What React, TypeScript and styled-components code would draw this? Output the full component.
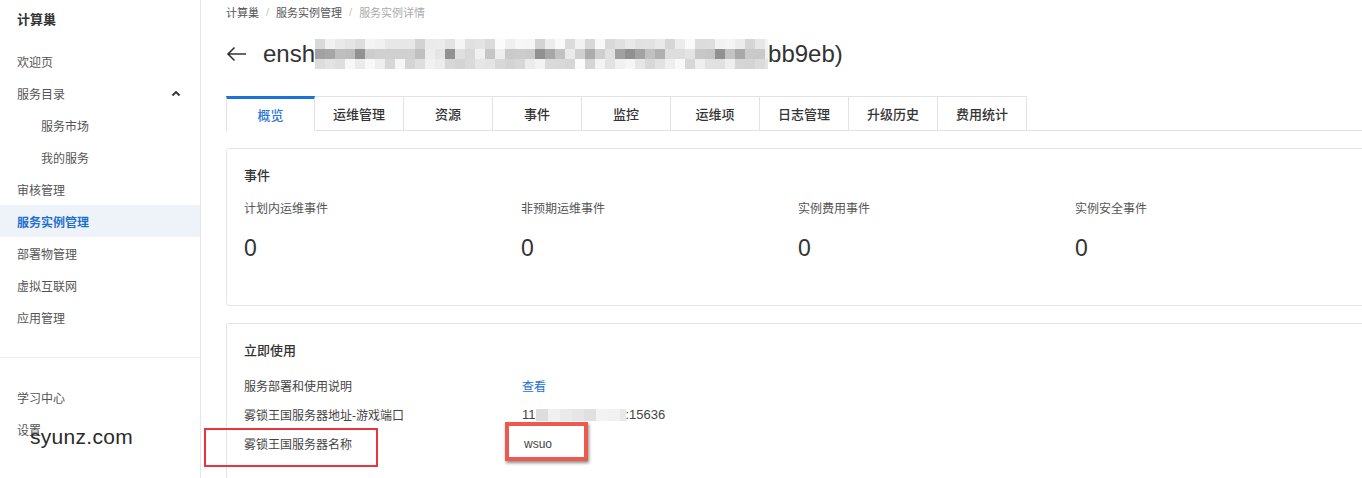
import React from "react";
import styled, { createGlobalStyle } from "styled-components";

const GlobalStyle = createGlobalStyle`
  * { box-sizing: border-box; }
  html, body { margin: 0; padding: 0; background: #fff; }
  body {
    font-family: "Liberation Sans", "Noto Sans CJK SC", sans-serif;
    color: #333;
    -webkit-font-smoothing: antialiased;
  }
`;

const sideItems = [
  { label: "欢迎页" },
  { label: "服务目录", open: true },
  { label: "服务市场", sub: true },
  { label: "我的服务", sub: true },
  { label: "审核管理" },
  { label: "服务实例管理", active: true },
  { label: "部署物管理" },
  { label: "虚拟互联网" },
  { label: "应用管理" },
];

const tabs = ["概览", "运维管理", "资源", "事件", "监控", "运维项", "日志管理", "升级历史", "费用统计"];

const events = ["计划内运维事件", "非预期运维事件", "实例费用事件", "实例安全事件"];

// pseudo random grey levels for the pixelated (redacted) areas
const shade = (i: number, seed: number) => {
  const v = Math.sin(i * 12.9898 + seed * 78.233) * 43758.5453;
  return v - Math.floor(v);
};

const Mosaic: React.FC<{ width: number; rows: number; cell: number; light?: boolean }> = ({
  width,
  rows,
  cell,
  light,
}) => {
  const cols = Math.ceil(width / cell);
  const rects = [];
  for (let r = 0; r < rows; r++) {
    for (let c = 0; c < cols; c++) {
      const s = shade(c, r + 1);
      const mid = r === 1 || rows === 1;
      let g = light ? 215 + s * 35 : mid ? 160 + s * 85 : 210 + s * 42;
      if (!light && c % 9 === 4 && r === 1) g = 145;
      rects.push(
        <rect
          key={`${r}-${c}`}
          x={c * cell}
          y={r * cell}
          width={cell}
          height={cell}
          fill={`rgb(${g | 0},${g | 0},${g | 0})`}
        />
      );
    }
  }
  return (
    <MosaicSvg width={width} height={rows * cell} viewBox={`0 0 ${width} ${rows * cell}`}>
      {rects}
    </MosaicSvg>
  );
};

export default function App() {
  return (
    <Page>
      <GlobalStyle />
      <Sidebar>
        <Brand>计算巢</Brand>
        <NavList>
          {sideItems.map((it) => (
            <NavItem key={it.label} $active={it.active} $sub={it.sub}>
              {it.label}
              {it.open && (
                <svg width="10" height="7" viewBox="0 0 10 7">
                  <path d="M1.5 5.5 L5 2 L8.5 5.5" fill="none" stroke="#333" strokeWidth="1.8" />
                </svg>
              )}
            </NavItem>
          ))}
        </NavList>
        <Divider />
        <NavList $bottom>
          <NavItem>学习中心</NavItem>
          <NavItem>设置</NavItem>
        </NavList>
      </Sidebar>

      <Main>
        <Breadcrumb>
          <Crumb>计算巢</Crumb>
          <Sep>/</Sep>
          <Crumb>服务实例管理</Crumb>
          <Sep>/</Sep>
          <Crumb $last>服务实例详情</Crumb>
        </Breadcrumb>

        <TitleRow>
          <BackArrow width="21" height="16" viewBox="0 0 21 16">
            <path d="M20 8 H2 M8.5 1.5 L2 8 L8.5 14.5" fill="none" stroke="#333" strokeWidth="1.6" />
          </BackArrow>
          <Title>
            ensh
            <Mosaic width={453} rows={3} cell={10} />
            bb9eb)
          </Title>
        </TitleRow>

        <TabBar>
          {tabs.map((t, i) => (
            <Tab key={t} $active={i === 0}>
              {t}
            </Tab>
          ))}
        </TabBar>

        <Card $height={158}>
          <CardTitle>事件</CardTitle>
          <StatGrid>
            {events.map((e) => (
              <Stat key={e}>
                <StatLabel>{e}</StatLabel>
                <StatValue>0</StatValue>
              </Stat>
            ))}
          </StatGrid>
        </Card>

        <Card $height={180}>
          <CardTitle>立即使用</CardTitle>
          <InfoList>
            <InfoRow>
              <InfoLabel>服务部署和使用说明</InfoLabel>
              <LinkText>查看</LinkText>
            </InfoRow>
            <InfoRow>
              <InfoLabel>雾锁王国服务器地址-游戏端口</InfoLabel>
              <InfoValue>
                11
                <Mosaic width={90} rows={1} cell={12} light />
                :15636
              </InfoValue>
            </InfoRow>
            <InfoRow>
              <InfoLabel>雾锁王国服务器名称</InfoLabel>
              <InfoValue $small>wsuo</InfoValue>
            </InfoRow>
          </InfoList>
        </Card>
      </Main>

      <Watermark>syunz.com</Watermark>
      <MarkBox $left={204} $top={428} $w={174} $h={39} />
      <MarkBox $left={505} $top={422} $w={83} $h={39} $bold />
    </Page>
  );
}

const Page = styled.div`
  position: relative;
  display: flex;
  width: 1362px;
  height: 478px;
  overflow: hidden;
  background: #fff;
`;

const Sidebar = styled.aside`
  flex: 0 0 201px;
  border-right: 1px solid #e4e6ea;
  display: flex;
  flex-direction: column;
`;

const Brand = styled.div`
  height: 40px;
  line-height: 40px;
  padding-left: 17px;
  font-size: 13px;
  font-weight: 700;
  color: #333;
`;

const NavList = styled.div<{ $bottom?: boolean }>`
  display: flex;
  flex-direction: column;
  margin-top: ${({ $bottom }) => ($bottom ? "23px" : "5px")};
`;

const NavItem = styled.div<{ $active?: boolean; $sub?: boolean }>`
  height: 32px;
  display: flex;
  align-items: center;
  justify-content: space-between;
  padding-left: ${({ $sub }) => ($sub ? "41px" : "17px")};
  padding-right: 19px;
  font-size: 12px;
  color: ${({ $active }) => ($active ? "#1f6fd1" : "#555")};
  font-weight: ${({ $active }) => ($active ? 600 : 400)};
  background: ${({ $active }) => ($active ? "#eef3fa" : "transparent")};
`;

const Divider = styled.div`
  margin-top: 24px;
  height: 1px;
  background: #eceef1;
`;

const Main = styled.main`
  flex: 1;
  min-width: 0;
  padding-left: 25px;
  margin-right: -30px;
`;

const Breadcrumb = styled.div`
  height: 24px;
  display: flex;
  align-items: center;
  gap: 7px;
  font-size: 11px;
`;

const Crumb = styled.span<{ $last?: boolean }>`
  color: ${({ $last }) => ($last ? "#aaa" : "#555")};
`;

const Sep = styled.span`
  color: #c8c8c8;
`;

const TitleRow = styled.div`
  height: 60px;
  display: flex;
  align-items: center;
  gap: 16px;
`;

const BackArrow = styled.svg`
  flex: none;
`;

const Title = styled.h1`
  margin: 0;
  display: flex;
  align-items: center;
  font-size: 24px;
  font-weight: 400;
  color: #333;
  white-space: nowrap;
`;

const MosaicSvg = styled.svg`
  display: block;
  flex: none;
`;

const TabBar = styled.div`
  margin-top: 12px;
  display: flex;
  border-bottom: 1px solid #e2e2e2;
  margin-right: -10px;
`;

const Tab = styled.div<{ $active?: boolean }>`
  width: 89px;
  height: 35px;
  margin-bottom: -1px;
  display: flex;
  align-items: center;
  justify-content: center;
  font-size: 13px;
  font-weight: 500;
  color: ${({ $active }) => ($active ? "#2f78d6" : "#333")};
  background: #fff;
  border: 1px solid #e2e2e2;
  border-left-width: ${({ $active }) => ($active ? "1px" : "0")};
  border-top: ${({ $active }) => ($active ? "3px solid #1a73d6" : "1px solid #e2e2e2")};
  border-bottom-color: ${({ $active }) => ($active ? "#fff" : "#e2e2e2")};
`;

const Card = styled.section<{ $height: number }>`
  margin-top: 17px;
  height: ${({ $height }) => $height}px;
  border: 1px solid #e4e4e4;
  border-radius: 3px;
  padding: 17px 0 0 17px;
`;

const CardTitle = styled.div`
  height: 20px;
  line-height: 20px;
  font-size: 13px;
  font-weight: 500;
  color: #333;
`;

const StatGrid = styled.div`
  margin-top: 15px;
  display: grid;
  grid-template-columns: repeat(4, 277px);
`;

const Stat = styled.div`
  display: flex;
  flex-direction: column;
`;

const StatLabel = styled.div`
  height: 16px;
  line-height: 16px;
  font-size: 12px;
  color: #555;
`;

const StatValue = styled.div`
  margin-top: 18px;
  height: 26px;
  line-height: 26px;
  font-size: 23px;
  font-weight: 300;
  color: #333;
`;

const InfoList = styled.div`
  margin-top: 16px;
  display: flex;
  flex-direction: column;
  gap: 13px;
`;

const InfoRow = styled.div`
  display: grid;
  grid-template-columns: 278px 1fr;
  height: 16px;
  align-items: center;
  font-size: 12px;
`;

const InfoLabel = styled.span`
  color: #444;
`;

const LinkText = styled.span`
  color: #1f6fd1;
`;

const InfoValue = styled.span<{ $small?: boolean }>`
  display: flex;
  align-items: center;
  color: #444;
  font-size: ${({ $small }) => ($small ? "12px" : "13px")};
  padding-left: ${({ $small }) => ($small ? "2px" : "0")};
`;

const Watermark = styled.div`
  position: absolute;
  left: 30px;
  top: 424px;
  font-size: 21px;
  letter-spacing: 0.3px;
  line-height: 26px;
  color: #2a2a2a;
`;

const MarkBox = styled.div<{ $left: number; $top: number; $w: number; $h: number; $bold?: boolean }>`
  position: absolute;
  left: ${({ $left }) => $left}px;
  top: ${({ $top }) => $top}px;
  width: ${({ $w }) => $w}px;
  height: ${({ $h }) => $h}px;
  border: ${({ $bold }) => ($bold ? "4px solid #ec5a4f" : "2px solid #e8363c")};
  box-shadow: ${({ $bold }) => ($bold ? "1px 2px 3px rgba(0,0,0,0.45)" : "none")};
  pointer-events: none;
`;
